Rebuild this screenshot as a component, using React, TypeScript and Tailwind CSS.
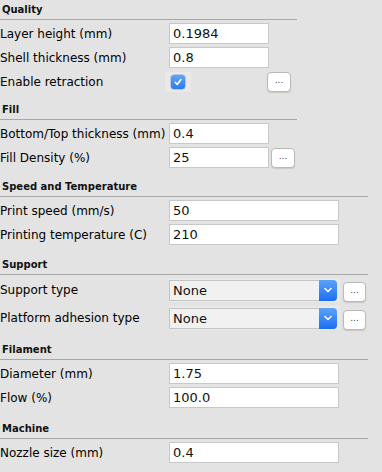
import React from 'react';

const font = { fontFamily: '"DejaVu Sans", "Liberation Sans", sans-serif' };

function Header({ title, className }: { title: string; className: string }) {
  return (
    <div
      className={`flex items-end border-b border-[#a8a8a8] pb-[4px] pl-[2px] text-[10px] font-bold leading-none text-[#111] ${className}`}
    >
      {title}
    </div>
  );
}

function Row({ label, children, tall }: { label: string; children: React.ReactNode; tall?: boolean }) {
  return (
    <div className={`flex items-center ${tall ? 'h-[24px]' : 'h-[21px]'}`}>
      <span className="w-[169px] shrink-0 whitespace-nowrap text-[12px] leading-none text-black">{label}</span>
      {children}
    </div>
  );
}

function Field({ value, wide }: { value: string; wide?: boolean }) {
  return (
    <input
      readOnly
      value={value}
      className={`h-[21px] border border-[#c8c8c8] bg-white px-[3px] text-[13px] text-[#111] outline-none ${wide ? 'w-[170px]' : 'w-[100px]'}`}
    />
  );
}

function More({ className }: { className: string }) {
  return (
    <button
      className={`flex h-[20px] items-center justify-center rounded-[4px] border border-[#b9b9b9] bg-white pb-[3px] text-[9px] leading-none text-[#444] shadow-[0_1px_1px_rgba(0,0,0,0.12)] ${className}`}
    >
      ...
    </button>
  );
}

function Select({ value }: { value: string }) {
  return (
    <div className="flex h-[24px] w-[171px] items-center bg-[#e9e9e9]">
      <div className="flex h-[21px] w-[168px] items-stretch rounded-r-[4px] border border-[#c4c4c4] border-r-0 bg-[#f1f1f1]">
        <span className="flex-1 pl-[3px] text-[13px] leading-[19px] text-[#111]">{value}</span>
        <span className="-my-px flex w-[18px] items-center justify-center rounded-r-[4px] bg-gradient-to-b from-[#5aa2f8] to-[#1b6ef3]">
          <svg width="8" height="6" viewBox="0 0 8 6" fill="none">
            <path d="M1 1.5 4 4.5 7 1.5" stroke="white" strokeWidth="1.5" strokeLinecap="round" strokeLinejoin="round" />
          </svg>
        </span>
      </div>
    </div>
  );
}

export default function App() {
  return (
    <div className="h-[472px] w-[382px] overflow-hidden bg-[#e3e3e3]" style={font}>
      <div className="w-[297px]">
        <Header title="Quality" className="h-[20px]" />
        <div className="flex flex-col gap-[3px] pt-[3px]">
          <Row label="Layer height (mm)">
            <Field value="0.1984" />
          </Row>
          <Row label="Shell thickness (mm)">
            <Field value="0.8" />
          </Row>
          <Row label="Enable retraction">
            <div className="-ml-[4px] flex h-[20px] w-[26px] items-center bg-[#e9e9e9] pl-[6px]">
              <span className="flex h-[14px] w-[14px] items-center justify-center rounded-[3px] bg-gradient-to-b from-[#5ea4f9] to-[#2a7bf2] shadow-[0_0_0_0.5px_rgba(0,60,160,0.4)]">
                <svg width="10" height="10" viewBox="0 0 10 10" fill="none">
                  <path d="M2.2 5.3 4.2 7.4 7.9 2.6" stroke="white" strokeWidth="1.6" strokeLinecap="round" strokeLinejoin="round" />
                </svg>
              </span>
            </div>
            <More className="ml-[76px] w-[24px]" />
          </Row>
        </div>

        <Header title="Fill" className="h-[28px]" />
        <div className="flex flex-col gap-[3px] pt-[3px]">
          <Row label="Bottom/Top thickness (mm)">
            <Field value="0.4" />
          </Row>
          <Row label="Fill Density (%)">
            <Field value="25" />
            <More className="ml-[2px] w-[24px]" />
          </Row>
        </div>
      </div>

      <div className="w-[368px]">
        <Header title="Speed and Temperature" className="h-[29px]" />
        <div className="flex flex-col gap-[3px] pt-[3px]">
          <Row label="Print speed (mm/s)">
            <Field value="50" wide />
          </Row>
          <Row label="Printing temperature (C)">
            <Field value="210" wide />
          </Row>
        </div>

        <Header title="Support" className="h-[30px]" />
        <div className="flex flex-col gap-[4px] pt-[3px]">
          <Row label="Support type" tall>
            <Select value="None" />
            <More className="mt-[3px] ml-[3px] w-[23px]" />
          </Row>
          <Row label="Platform adhesion type" tall>
            <Select value="None" />
            <More className="mt-[3px] ml-[3px] w-[23px]" />
          </Row>
        </div>

        <Header title="Filament" className="h-[30px]" />
        <div className="flex flex-col gap-[3px] pt-[3px]">
          <Row label="Diameter (mm)">
            <Field value="1.75" wide />
          </Row>
          <Row label="Flow (%)">
            <Field value="100.0" wide />
          </Row>
        </div>

        <Header title="Machine" className="h-[31px]" />
        <div className="flex flex-col gap-[3px] pt-[3px]">
          <Row label="Nozzle size (mm)">
            <Field value="0.4" wide />
          </Row>
        </div>
      </div>
    </div>
  );
}
